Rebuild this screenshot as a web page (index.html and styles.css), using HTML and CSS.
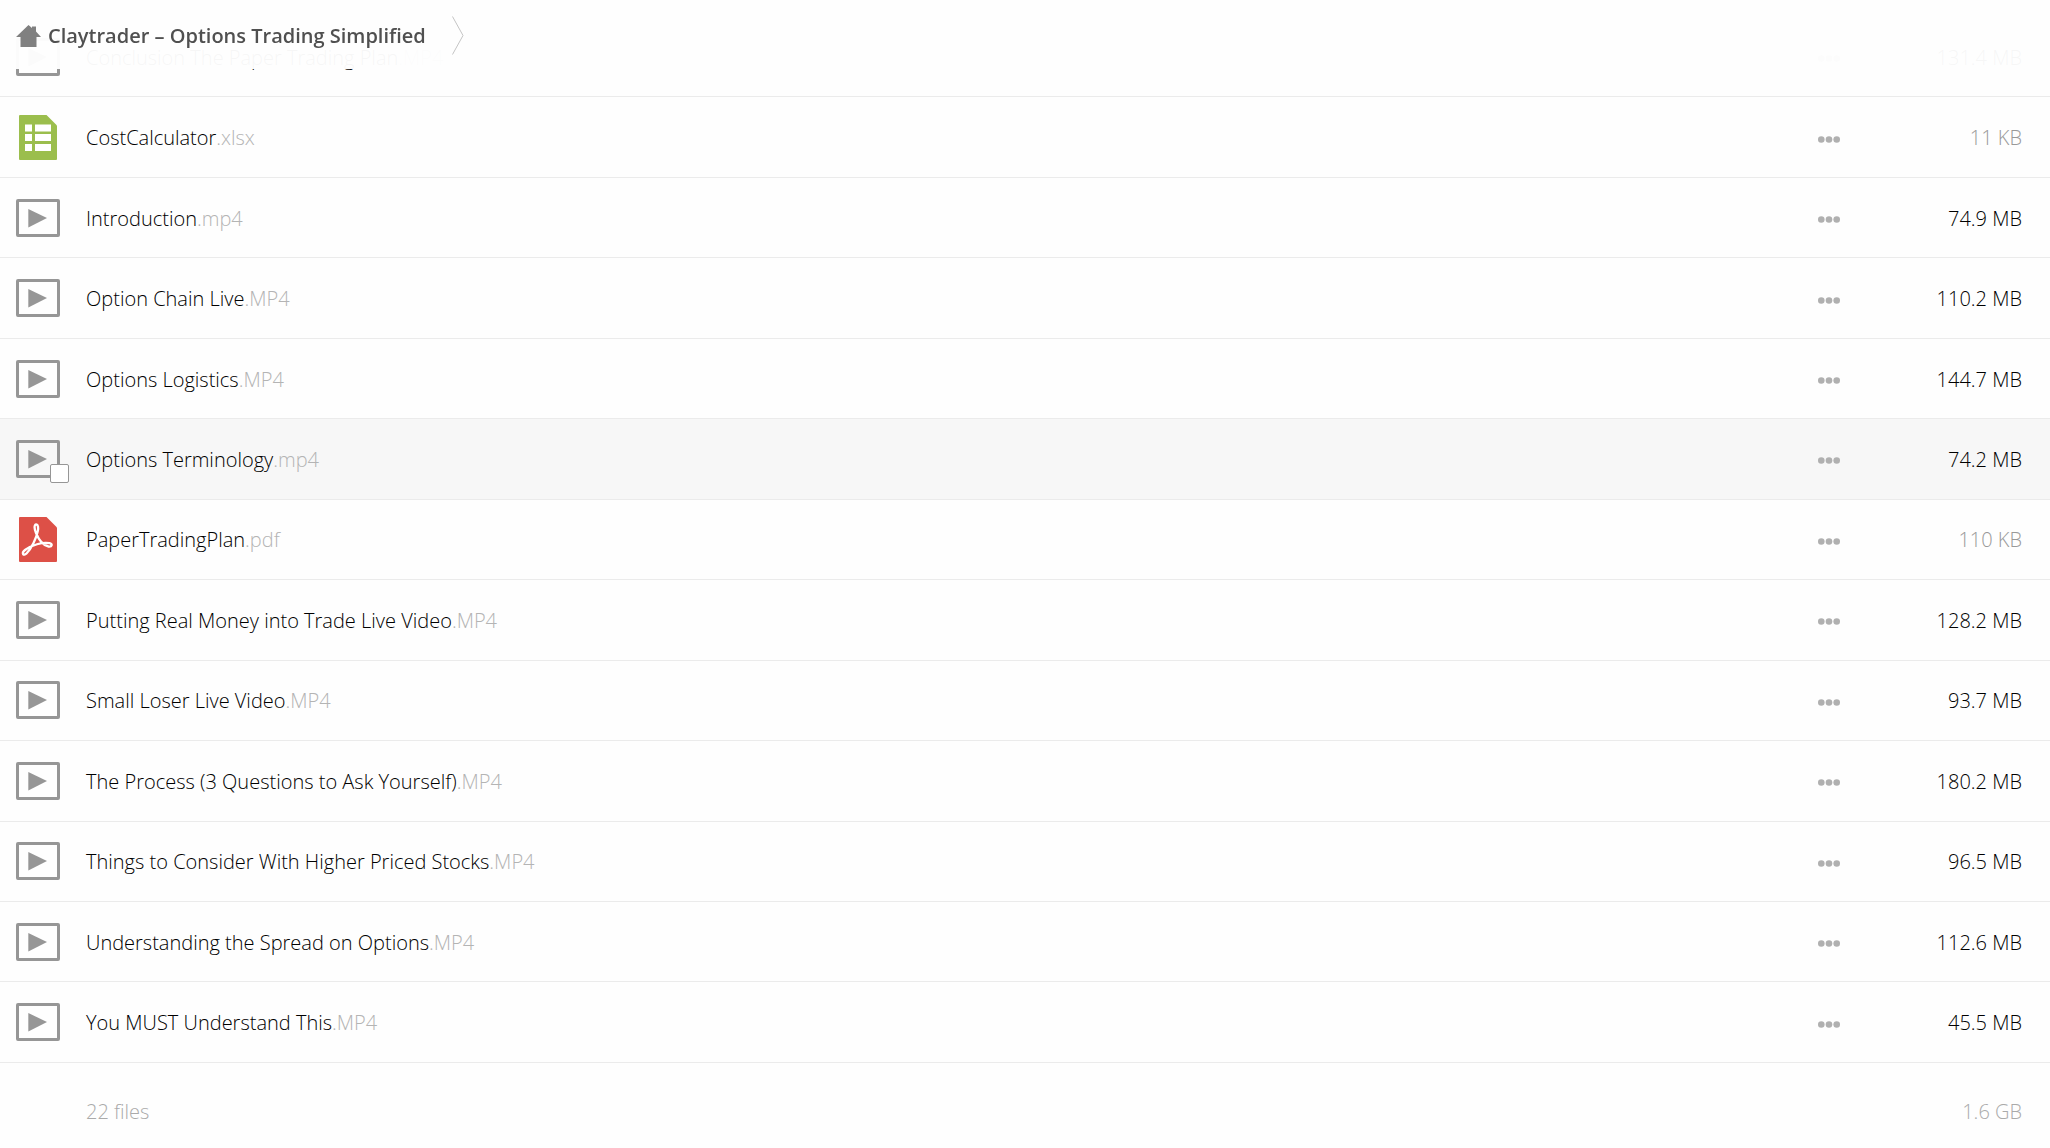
FILE: index.html
```html
<!DOCTYPE html>
<html lang="en">
<head>
    <meta charset="UTF-8">
    <meta name="viewport" content="width=device-width, initial-scale=1.0">
    <title>Claytrader – Options Trading Simplified</title>
    <link rel="stylesheet" href="styles.css">
</head>
<body>
    <svg class="sprite" aria-hidden="true">
        <symbol id="icon-video" viewBox="0 0 44 38">
            <rect x="1.5" y="1.5" width="41" height="35" rx="0.5" fill="none" stroke="#969696" stroke-width="3"/>
            <path d="M12.300 10v18.500L31 19z" fill="#969696"/>
        </symbol>
        <symbol id="icon-sheet" viewBox="0 0 38 45">
            <path d="M1 0h26.500L38 10.500V44a1 1 0 0 1-1 1H1a1 1 0 0 1-1-1V1a1 1 0 0 1 1-1z" fill="#9bbe4d"/>
            <path d="M6 9.500h7v7H6zM16 9.500h16v7H16zM6 19h7v7H6zM16 19h16v7H16zM6 29h7v7H6zM16 29h16v7H16z" fill="#fff"/>
        </symbol>
        <symbol id="icon-pdf" viewBox="0 0 38 45">
            <path d="M1 0h26.500L38 10.500V44a1 1 0 0 1-1 1H1a1 1 0 0 1-1-1V1a1 1 0 0 1 1-1z" fill="#dd5047"/>
            <path d="M17.300 7.500c-2.500 0-2 4.500-.3 8.500 2.500 6 7 12.500 12.500 13.500 3.500.5 4.500-2.500 1-3.300-7-1.300-18 1.800-24.500 6.800-4 3.200-1.500 6.500 1.500 3.500 5-5 10-15.500 11.300-22.500.7-3.500.3-6.500-1.500-6.500z" fill="none" stroke="#fff" stroke-width="2.300" stroke-linejoin="round"/>
        </symbol>
        <symbol id="icon-dots" viewBox="0 0 22 7">
            <circle cx="3.300" cy="3.500" r="3.300"/>
            <circle cx="11" cy="3.500" r="3.300"/>
            <circle cx="18.700" cy="3.500" r="3.300"/>
        </symbol>
    </svg>

    <header class="header">
        <a href="#" class="crumb">
            <svg class="home" viewBox="0 0 25 22" aria-hidden="true"><path d="M12.500 0l3.500 3V1.500h4v5L25 12h-4.500v10h-16V12H0z"/></svg>
            Claytrader – Options Trading Simplified
        </a>
        <svg class="arrow" viewBox="0 0 12 39" aria-hidden="true"><path d="M.5.5L11 19.500.5 38.500"/></svg>
    </header>

    <table class="files">
        <tbody>
            <tr>
                <td class="icon"><svg class="video"><use href="#icon-video"/></svg></td>
                <td class="name"><a href="#">Conclusion The Paper Trading Plan<span>.MP4</span></a></td>
                <td class="menu"><button type="button" aria-label="More"><svg><use href="#icon-dots"/></svg></button></td>
                <td class="size">131.4 MB</td>
            </tr>
            <tr>
                <td class="icon"><svg class="doc"><use href="#icon-sheet"/></svg></td>
                <td class="name"><a href="#">CostCalculator<span>.xlsx</span></a></td>
                <td class="menu"><button type="button" aria-label="More"><svg><use href="#icon-dots"/></svg></button></td>
                <td class="size small">11 KB</td>
            </tr>
            <tr>
                <td class="icon"><svg class="video"><use href="#icon-video"/></svg></td>
                <td class="name"><a href="#">Introduction<span>.mp4</span></a></td>
                <td class="menu"><button type="button" aria-label="More"><svg><use href="#icon-dots"/></svg></button></td>
                <td class="size">74.9 MB</td>
            </tr>
            <tr>
                <td class="icon"><svg class="video"><use href="#icon-video"/></svg></td>
                <td class="name"><a href="#">Option Chain Live<span>.MP4</span></a></td>
                <td class="menu"><button type="button" aria-label="More"><svg><use href="#icon-dots"/></svg></button></td>
                <td class="size">110.2 MB</td>
            </tr>
            <tr>
                <td class="icon"><svg class="video"><use href="#icon-video"/></svg></td>
                <td class="name"><a href="#">Options Logistics<span>.MP4</span></a></td>
                <td class="menu"><button type="button" aria-label="More"><svg><use href="#icon-dots"/></svg></button></td>
                <td class="size">144.7 MB</td>
            </tr>
            <tr class="active">
                <td class="icon"><svg class="video"><use href="#icon-video"/></svg><input type="checkbox" class="check" aria-label="Select Options Terminology.mp4"></td>
                <td class="name"><a href="#">Options Terminology<span>.mp4</span></a></td>
                <td class="menu"><button type="button" aria-label="More"><svg><use href="#icon-dots"/></svg></button></td>
                <td class="size">74.2 MB</td>
            </tr>
            <tr>
                <td class="icon"><svg class="doc"><use href="#icon-pdf"/></svg></td>
                <td class="name"><a href="#">PaperTradingPlan<span>.pdf</span></a></td>
                <td class="menu"><button type="button" aria-label="More"><svg><use href="#icon-dots"/></svg></button></td>
                <td class="size small">110 KB</td>
            </tr>
            <tr>
                <td class="icon"><svg class="video"><use href="#icon-video"/></svg></td>
                <td class="name"><a href="#">Putting Real Money into Trade Live Video<span>.MP4</span></a></td>
                <td class="menu"><button type="button" aria-label="More"><svg><use href="#icon-dots"/></svg></button></td>
                <td class="size">128.2 MB</td>
            </tr>
            <tr>
                <td class="icon"><svg class="video"><use href="#icon-video"/></svg></td>
                <td class="name"><a href="#">Small Loser Live Video<span>.MP4</span></a></td>
                <td class="menu"><button type="button" aria-label="More"><svg><use href="#icon-dots"/></svg></button></td>
                <td class="size">93.7 MB</td>
            </tr>
            <tr>
                <td class="icon"><svg class="video"><use href="#icon-video"/></svg></td>
                <td class="name"><a href="#">The Process (3 Questions to Ask Yourself)<span>.MP4</span></a></td>
                <td class="menu"><button type="button" aria-label="More"><svg><use href="#icon-dots"/></svg></button></td>
                <td class="size">180.2 MB</td>
            </tr>
            <tr>
                <td class="icon"><svg class="video"><use href="#icon-video"/></svg></td>
                <td class="name"><a href="#">Things to Consider With Higher Priced Stocks<span>.MP4</span></a></td>
                <td class="menu"><button type="button" aria-label="More"><svg><use href="#icon-dots"/></svg></button></td>
                <td class="size">96.5 MB</td>
            </tr>
            <tr>
                <td class="icon"><svg class="video"><use href="#icon-video"/></svg></td>
                <td class="name"><a href="#">Understanding the Spread on Options<span>.MP4</span></a></td>
                <td class="menu"><button type="button" aria-label="More"><svg><use href="#icon-dots"/></svg></button></td>
                <td class="size">112.6 MB</td>
            </tr>
            <tr>
                <td class="icon"><svg class="video"><use href="#icon-video"/></svg></td>
                <td class="name"><a href="#">You MUST Understand This<span>.MP4</span></a></td>
                <td class="menu"><button type="button" aria-label="More"><svg><use href="#icon-dots"/></svg></button></td>
                <td class="size">45.5 MB</td>
            </tr>
        </tbody>
    </table>

    <footer class="total">
        <span>22 files</span>
        <span>1.6 GB</span>
    </footer>
</body>
</html>
```
FILE: styles.css
```css
body {
    margin: 0;
    padding-top: 17px;
    font-family: "Open Sans", sans-serif;
    font-size: 20px;
    font-weight: 300;
    line-height: 28px;
    color: #000;
    background-color: #fefefe;
}

.sprite {
    display: none;
}

a {
    color: inherit;
    text-decoration: none;
}

/* translucent bar, the list scrolls under it */
.header {
    position: fixed;
    top: 0;
    left: 0;
    right: 0;
    z-index: 10;
    display: flex;
    align-items: center;
    gap: 26px;
    height: 69px;
    padding: 2px 16px 0;
    box-sizing: border-box;
    background-color: rgba(254, 254, 254, 0.97);
}

.crumb {
    display: flex;
    align-items: center;
    gap: 7px;
    font-weight: 600;
    color: #505050;
}

.home {
    width: 25px;
    height: 22px;
    fill: #808080;
}

.arrow {
    width: 12px;
    height: 39px;
    fill: none;
    stroke: #c4c4c4;
}

.files {
    width: 100%;
    height: calc(100vh - 102px);
    border-collapse: separate;
    border-spacing: 0;
}

.files td {
    height: 80px;
    padding: 0;
    box-sizing: border-box;
    border-bottom: 1px solid #ebebeb;
    vertical-align: middle;
}

.active {
    background-color: #f7f7f7;
}

.files .icon {
    position: relative;
    width: 86px;
    padding-left: 16px;
}

.icon svg {
    display: block;
}

.video {
    width: 44px;
    height: 38px;
}

.doc {
    width: 38px;
    height: 45px;
    margin-left: 3px;
}

.check {
    position: absolute;
    left: 50px;
    bottom: 16px;
    width: 19px;
    height: 19px;
    margin: 0;
    appearance: none;
    background-color: #fff;
    border: 1px solid #969696;
    border-radius: 2px;
}

.files .name,
.files .size {
    padding-top: 2px;
}

.name span {
    color: #b4b4b4;
}

.files .menu {
    width: 62px;
    padding-top: 4px;
}

.menu button {
    display: block;
    margin: 0;
    padding: 10px 0;
    border: none;
    background: none;
    cursor: pointer;
}

.menu svg {
    display: block;
    width: 22px;
    height: 7px;
    fill: #b0b0b0;
}

.files .size {
    width: 170px;
    padding-right: 28px;
    text-align: right;
}

.files .small {
    color: #999;
}

.total {
    display: flex;
    justify-content: space-between;
    padding: 35px 28px 0 86px;
    color: #aaa;
}
```
